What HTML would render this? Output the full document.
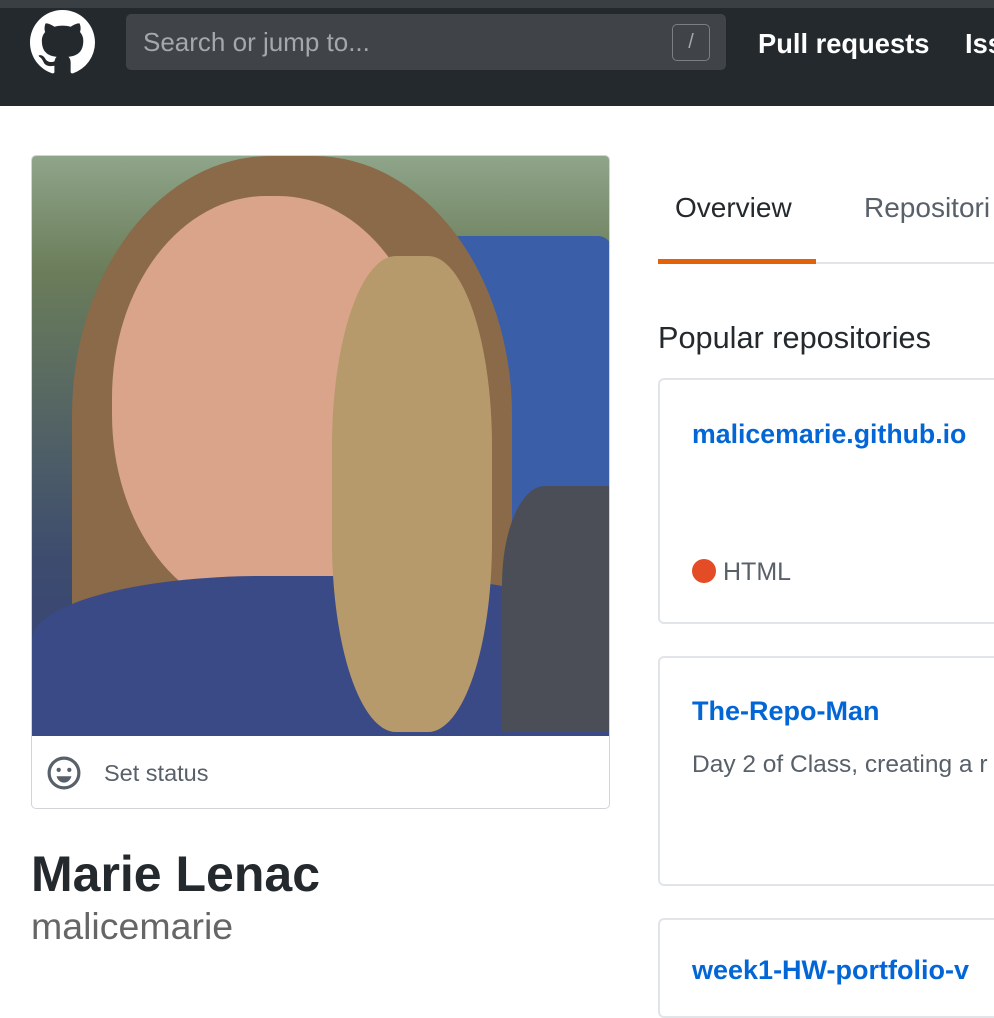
<!DOCTYPE html>
<html><head><meta charset="utf-8"><style>
*{margin:0;padding:0;box-sizing:border-box}
body{width:994px;height:976px;overflow:hidden;background:#fff;font-family:"Liberation Sans",sans-serif;position:relative}
.a{position:absolute;white-space:nowrap}
</style></head><body>
<div class="a" style="left:0;top:0;width:994px;height:106px;background:#24292e"></div>
<div class="a" style="left:0;top:0;width:994px;height:8px;background:#3a3f44"></div>
<svg class="a" style="left:30px;top:10px" width="65" height="65" viewBox="0 0 16 16"><path fill="#fff" d="M8 0C3.58 0 0 3.58 0 8c0 3.54 2.29 6.53 5.47 7.59.4.07.55-.17.55-.38 0-.19-.01-.82-.01-1.49-2.01.37-2.53-.49-2.69-.94-.09-.23-.48-.94-.82-1.13-.28-.15-.68-.52-.01-.53.63-.01 1.08.58 1.23.82.72 1.21 1.87.87 2.33.66.07-.52.28-.87.51-1.07-1.78-.2-3.64-.89-3.64-3.95 0-.87.31-1.59.82-2.15-.08-.2-.36-1.02.08-2.12 0 0 .67-.21 2.2.82.64-.18 1.32-.27 2-.27.68 0 1.36.09 2 .27 1.53-1.04 2.2-.82 2.2-.82.44 1.1.16 1.92.08 2.12.51.56.82 1.27.82 2.15 0 3.07-1.87 3.75-3.65 3.95.29.25.54.73.54 1.48 0 1.07-.01 1.93-.01 2.2 0 .21.15.46.55.38A8.013 8.013 0 0016 8c0-4.42-3.58-8-8-8z"/></svg>
<div class="a" style="left:126px;top:14px;width:600px;height:56px;background:#404448;border-radius:5px"></div>
<div class="a" style="left:143px;top:27px;font-size:26px;color:#a3a8ad">Search or jump to...</div>
<div class="a" style="left:672px;top:24px;width:38px;height:37px;border:1px solid #7a7f84;border-radius:5px;color:#a3a8ad;font-size:20px;text-align:center;line-height:35px">/</div>
<div class="a" style="left:758px;top:28px;font-size:27.3px;font-weight:bold;color:#fff">Pull requests</div>
<div class="a" style="left:965px;top:28px;font-size:27.3px;font-weight:bold;color:#fff">Iss</div>

<div class="a" style="left:31px;top:155px;width:579px;height:654px;border:1px solid #d1d5da;border-radius:5px;overflow:hidden">
<div style="position:absolute;left:0;top:0;width:577px;height:576px;background:linear-gradient(180deg,#8fa58a 0%,#6b7d5a 20%,#3d4c6e 70%,#33407a 100%)">
<div style="position:absolute;left:380px;top:80px;width:200px;height:300px;background:#3a5fa8;border-radius:14px"></div>
<div style="position:absolute;left:40px;top:0;width:440px;height:576px;background:#8a6a48;border-radius:45% 45% 10% 10%"></div>
<div style="position:absolute;left:80px;top:40px;width:320px;height:420px;background:#d9a48a;border-radius:48%"></div>
<div style="position:absolute;left:0;top:420px;width:577px;height:160px;background:#3a4a86;border-radius:40% 40% 0 0"></div>
<div style="position:absolute;left:300px;top:100px;width:160px;height:476px;background:#b69a6c;border-radius:40%"></div>
<div style="position:absolute;left:470px;top:330px;width:107px;height:246px;background:#4b4e56;border-radius:40% 0 0 0"></div>
</div>
<svg style="position:absolute;left:15px;top:600px" width="34" height="34" viewBox="0 0 16 16"><circle cx="8" cy="8" r="7" fill="none" stroke="#586069" stroke-width="1.5"/><circle cx="5.5" cy="6.5" r="1" fill="#586069"/><circle cx="10.5" cy="6.5" r="1" fill="#586069"/><path d="M4.5 9.5h7c-.5 2-2 3-3.5 3s-3-1-3.5-3z" fill="#586069"/></svg>
<div style="position:absolute;left:72px;top:604px;font-size:23.5px;color:#586069">Set status</div>
</div>
<div class="a" style="left:31px;top:845px;font-size:50px;font-weight:bold;color:#24292e">Marie Lenac</div>
<div class="a" style="left:31px;top:905px;font-size:37.5px;color:#666">malicemarie</div>

<div class="a" style="left:675px;top:192px;font-size:28px;color:#24292e">Overview</div>
<div class="a" style="left:864px;top:192px;font-size:28px;color:#586069">Repositori</div>
<div class="a" style="left:658px;top:262px;width:336px;height:2px;background:#e1e4e8"></div>
<div class="a" style="left:658px;top:259px;width:158px;height:5px;background:#e36209"></div>
<div class="a" style="left:658px;top:320px;font-size:30.7px;color:#24292e">Popular repositories</div>

<div class="a" style="left:658px;top:378px;width:350px;height:246px;border:2px solid #e1e4e8;border-radius:6px"></div>
<div class="a" style="left:692px;top:419px;font-size:26.7px;font-weight:bold;color:#0366d6">malicemarie.github.io</div>
<div class="a" style="left:692px;top:559px;width:24px;height:24px;border-radius:50%;background:#e34c26"></div>
<div class="a" style="left:723px;top:558px;font-size:25px;color:#586069">HTML</div>

<div class="a" style="left:658px;top:656px;width:350px;height:230px;border:2px solid #e1e4e8;border-radius:6px"></div>
<div class="a" style="left:692px;top:696px;font-size:27px;font-weight:bold;color:#0366d6">The-Repo-Man</div>
<div class="a" style="left:692px;top:751px;font-size:24.5px;color:#586069">Day 2 of Class, creating a r</div>

<div class="a" style="left:658px;top:918px;width:350px;height:100px;border:2px solid #e1e4e8;border-radius:6px"></div>
<div class="a" style="left:692px;top:955px;font-size:27px;font-weight:bold;color:#0366d6">week1-HW-portfolio-v</div>
</body></html>
